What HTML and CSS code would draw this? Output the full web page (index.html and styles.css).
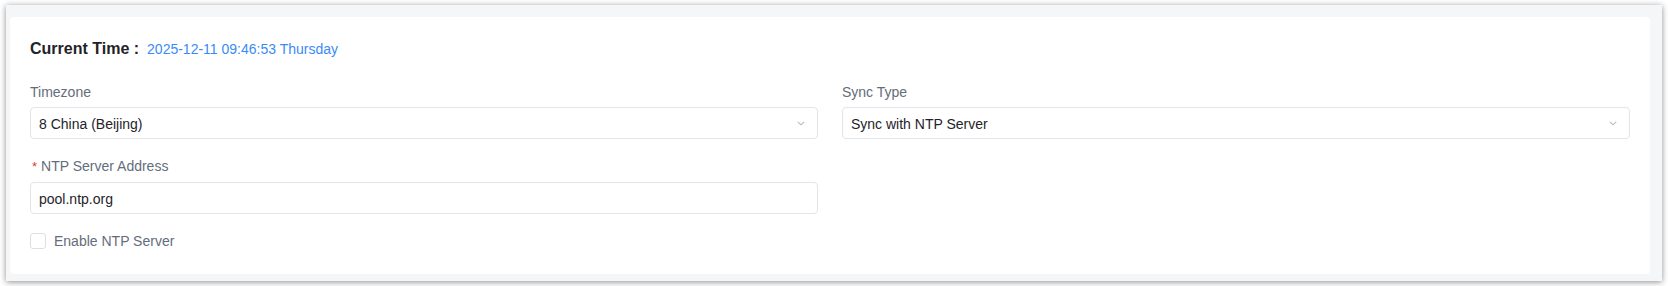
FILE: index.html
```html
<!DOCTYPE html>
<html lang="en">
<head>
<meta charset="utf-8">
<title>Time Settings</title>
<link rel="stylesheet" href="styles.css">
</head>
<body>
<div class="frame">
  <div class="card">
    <div class="current">
      <span class="current-label">Current Time :</span>
      <span class="current-value">2025-12-11 09:46:53 Thursday</span>
    </div>
    <div class="grid">
      <div class="field">
        <label class="label">Timezone</label>
        <div class="select">
          <span class="value">8 China (Beijing)</span>
          <svg class="chev" width="8" height="5" viewBox="0 0 8 5"><path d="M0.8 0.8 L4 3.8 L7.2 0.8" fill="none" stroke="#b4b8c0" stroke-width="1.1"/></svg>
        </div>
      </div>
      <div class="field">
        <label class="label">Sync Type</label>
        <div class="select">
          <span class="value">Sync with NTP Server</span>
          <svg class="chev" width="8" height="5" viewBox="0 0 8 5"><path d="M0.8 0.8 L4 3.8 L7.2 0.8" fill="none" stroke="#b4b8c0" stroke-width="1.1"/></svg>
        </div>
      </div>
      <div class="field">
        <label class="label"><span class="req">*</span>NTP Server Address</label>
        <div class="select input">
          <span class="value">pool.ntp.org</span>
        </div>
      </div>
      <div class="field"></div>
    </div>
    <div class="check-row">
      <span class="checkbox"></span>
      <span class="check-label">Enable NTP Server</span>
    </div>
  </div>
</div>
</body>
</html>
```

FILE: styles.css
```css
html, body {
  margin: 0;
  padding: 0;
  background: #ffffff;
  font-family: "Liberation Sans", Arial, sans-serif;
}

.frame {
  margin: 5px 6px;
  height: 276px;
  box-sizing: border-box;
  background: #f5f6f8;
  padding: 12px 12px 7px 4px;
  box-shadow: 0 1px 6px rgba(0, 0, 0, 0.45);
}

.card {
  background: #ffffff;
  border-radius: 4px;
  height: 100%;
  box-sizing: border-box;
  padding: 20px 20px 0 20px;
}

.current {
  display: flex;
  align-items: baseline;
  height: 24px;
  line-height: 24px;
}

.current-label {
  font-size: 16px;
  font-weight: bold;
  color: #1f2329;
  margin-right: 8px;
}

.current-value {
  font-size: 14px;
  color: #3a8bf6;
}

.grid {
  display: grid;
  grid-template-columns: 1fr 1fr;
  column-gap: 24px;
  row-gap: 16px;
  margin-top: 20px;
}

.field {
  display: flex;
  flex-direction: column;
}

.label {
  font-size: 14px;
  line-height: 22px;
  color: #646d7a;
  margin-bottom: 4px;
}

.req {
  color: #e5393b;
  margin-right: 4px;
  margin-left: 2px;
  font-size: 13px;
}

.select {
  display: flex;
  align-items: center;
  justify-content: space-between;
  height: 32px;
  box-sizing: border-box;
  border: 1px solid #e3e5ea;
  border-radius: 4px;
  padding: 0 12px 0 8px;
}

.value {
  font-size: 14px;
  color: #1f2329;
  padding-top: 2px;
}

.chev {
  display: block;
  margin-top: 1px;
}

.check-row {
  display: flex;
  align-items: center;
  margin-top: 19px;
  height: 16px;
}

.checkbox {
  width: 16px;
  height: 16px;
  box-sizing: border-box;
  border: 1px solid #dcdfe6;
  border-radius: 3px;
  background: #ffffff;
}

.check-label {
  margin-left: 8px;
  font-size: 14px;
  color: #646d7a;
}
```
